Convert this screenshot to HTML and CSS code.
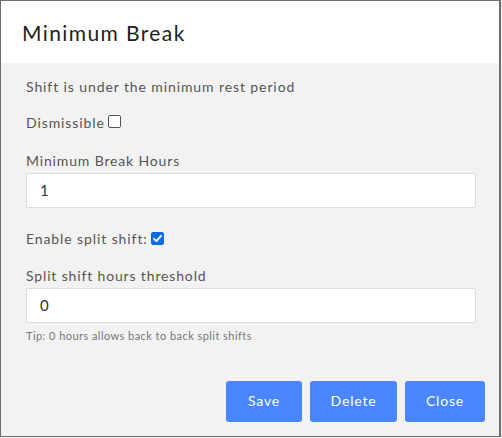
FILE: index.html
```html
<!DOCTYPE html>
<html>
<head>
<meta charset="utf-8">
<link rel="stylesheet" href="styles.css">
</head>
<body>
<div class="dialog">
  <div class="header">Minimum Break</div>
  <div class="main">
    <div class="content">
      <p class="msg">Shift is under the minimum rest period</p>
      <div class="check-row dismiss">
        <span>Dismissible</span>
        <span class="cb"></span>
      </div>
      <label class="field-label first">Minimum Break Hours</label>
      <div class="input">1</div>
      <div class="check-row split">
        <span>Enable split shift:</span>
        <span class="cb checked">
          <svg viewBox="0 0 13 13" width="13" height="13"><path d="M3 6.8 L5.4 9.2 L10 3.8" fill="none" stroke="#fff" stroke-width="1.9" stroke-linecap="round" stroke-linejoin="round"/></svg>
        </span>
      </div>
      <label class="field-label second">Split shift hours threshold</label>
      <div class="input">0</div>
      <p class="tip">Tip: 0 hours allows back to back split shifts</p>
    </div>
    <div class="footer">
      <button class="btn save">Save</button>
      <button class="btn delete">Delete</button>
      <button class="btn close">Close</button>
    </div>
  </div>
</div>
</body>
</html>
```
FILE: styles.css
```css
html, body {
  margin: 0;
  padding: 0;
  background: #f2f2f2;
}
body {
  font-family: Lato, "Open Sans", sans-serif;
  width: 502px;
  height: 438px;
}
.dialog {
  box-sizing: border-box;
  width: 501px;
  height: 437px;
  border: 1px solid #6e6e6e;
  border-width: 1px 2px 1px 1px;
  display: flex;
  flex-direction: column;
  background: #f2f2f2;
}
.header {
  height: 62px;
  flex: none;
  background: #ffffff;
  display: flex;
  align-items: center;
  padding-left: 21px;
  font-size: 21px;
  color: #1e1e1e;
  letter-spacing: 1.4px;
  padding-top: 1px;
  box-sizing: border-box;
}
.main {
  flex: 1;
  display: flex;
  flex-direction: column;
}
.content {
  padding: 14px 23px 0 25px;
  color: #555;
  font-size: 14px;
}
.msg {
  margin: 0;
  line-height: 20px;
  letter-spacing: 0.9px;
}
.check-row {
  display: flex;
  align-items: center;
  line-height: 20px;
  letter-spacing: 0.9px;
}
.dismiss { margin-top: 16px; }
.split { margin-top: 21px; }
.cb {
  box-sizing: border-box;
  width: 13px;
  height: 13px;
  margin-left: 3px;
  border: 1px solid #555;
  border-radius: 2px;
  background: #fff;
  display: inline-flex;
  margin-top: -3px;
}
.cb.checked {
  background: #0b6ce8;
  border-color: #0b6ce8;
  margin-left: 3px;
  margin-top: -2px;
}
.cb svg { display: block; margin: -1px; }
.field-label {
  display: block;
  line-height: 20px;
  letter-spacing: 0.85px;
}
.field-label.first { margin-top: 18px; margin-bottom: 2px; }
.field-label.second { margin-top: 17px; margin-bottom: 2px; }
.input {
  box-sizing: border-box;
  height: 35px;
  background: #fff;
  border: 1px solid #dcdcdc;
  border-radius: 2px;
  padding-left: 13px;
  line-height: 33px;
  font-size: 15px;
  color: #333;
}
.tip {
  margin: 6px 0 0 0;
  font-size: 11px;
  line-height: 14px;
  color: #777;
  letter-spacing: 0.45px;
}
.footer {
  margin-top: auto;
  display: flex;
  justify-content: flex-end;
  gap: 8px;
  padding: 0 14px 14px 0;
}
.btn {
  height: 41px;
  border: none;
  border-radius: 3px;
  background: #4a86ff;
  color: #fff;
  font-family: Lato, "Open Sans", sans-serif;
  font-size: 14px;
  letter-spacing: 0.8px;
  padding: 0 0 3px 0;
}
.save { width: 76px; }
.delete { width: 87px; }
.close { width: 80px; }
```
